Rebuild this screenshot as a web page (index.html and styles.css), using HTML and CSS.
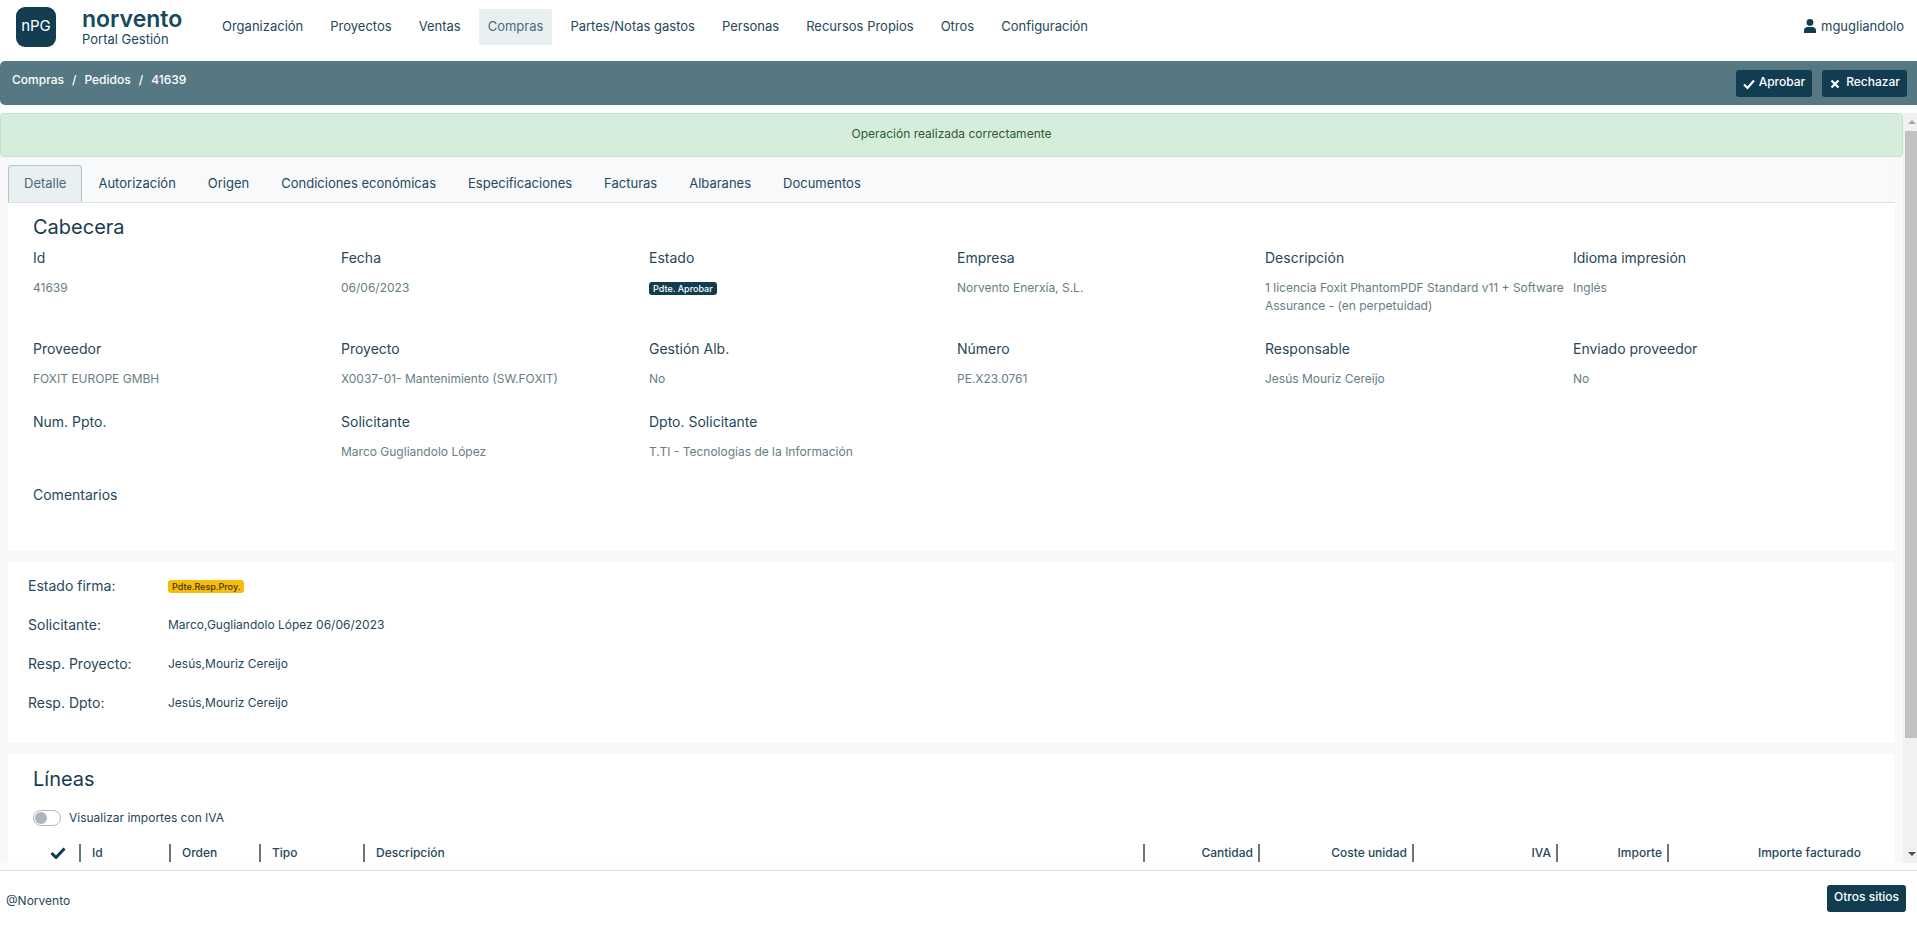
FILE: index.html
```html
<!DOCTYPE html>
<html lang="es">
<head>
<meta charset="utf-8">
<title>Portal Gestión - Pedido 41639</title>
<link rel="stylesheet" href="styles.css">
</head>
<body>
<header class="header">
  <div class="logo">nPG</div>
  <div class="brand">
    <span class="brand-name">norvento</span>
    <span class="brand-sub">Portal Gestión</span>
  </div>
  <nav class="nav">
    <a class="nav-link" href="#">Organización</a>
    <a class="nav-link" href="#">Proyectos</a>
    <a class="nav-link" href="#">Ventas</a>
    <a class="nav-link active" href="#">Compras</a>
    <a class="nav-link" href="#">Partes/Notas gastos</a>
    <a class="nav-link" href="#">Personas</a>
    <a class="nav-link" href="#">Recursos Propios</a>
    <a class="nav-link" href="#">Otros</a>
    <a class="nav-link" href="#">Configuración</a>
  </nav>
  <a class="user" href="#">
    <svg class="user-icon" viewBox="0 0 12 14"><circle cx="6" cy="3.4" r="3.4"/><path d="M0 14v-2.4C0 9.400 1.600 8 3.400 8h5.200C10.400 8 12 9.400 12 11.600V14z"/></svg>
    mgugliandolo
  </a>
</header>

<div class="toolbar">
  <nav class="breadcrumb">
    <a href="#">Compras</a><span>/</span><a href="#">Pedidos</a><span>/</span><a href="#">41639</a>
  </nav>
  <div class="actions">
    <button class="btn" type="button"><svg class="btn-icon" viewBox="0 0 12 12"><path d="M1 6.500l3.500 3.500L11 2.500"/></svg>Aprobar</button>
    <button class="btn btn-wide" type="button"><svg class="btn-icon" viewBox="0 0 12 12"><path d="M2.500 2.500l7 7M9.500 2.500l-7 7"/></svg>Rechazar</button>
  </div>
</div>

<div class="viewport">
  <main class="content">
    <div class="alert" role="alert">Operación realizada correctamente</div>
    <nav class="tabs">
      <a class="tab active" href="#">Detalle</a>
      <a class="tab" href="#">Autorización</a>
      <a class="tab" href="#">Origen</a>
      <a class="tab" href="#">Condiciones económicas</a>
      <a class="tab" href="#">Especificaciones</a>
      <a class="tab" href="#">Facturas</a>
      <a class="tab" href="#">Albaranes</a>
      <a class="tab" href="#">Documentos</a>
    </nav>

    <section class="card card-head">
      <h2 class="title">Cabecera</h2>
      <dl class="fields">
        <div class="field"><dt>Id</dt><dd>41639</dd></div>
        <div class="field"><dt>Fecha</dt><dd>06/06/2023</dd></div>
        <div class="field"><dt>Estado</dt><dd><span class="badge">Pdte. Aprobar</span></dd></div>
        <div class="field"><dt>Empresa</dt><dd>Norvento Enerxía, S.L.</dd></div>
        <div class="field"><dt>Descripción</dt><dd>1 licencia Foxit PhantomPDF Standard v11 + Software Assurance - (en perpetuidad)</dd></div>
        <div class="field"><dt>Idioma impresión</dt><dd>Inglés</dd></div>
        <div class="field"><dt>Proveedor</dt><dd>FOXIT EUROPE GMBH</dd></div>
        <div class="field"><dt>Proyecto</dt><dd>X0037-01- Mantenimiento (SW.FOXIT)</dd></div>
        <div class="field"><dt>Gestión Alb.</dt><dd>No</dd></div>
        <div class="field"><dt>Número</dt><dd>PE.X23.0761</dd></div>
        <div class="field"><dt>Responsable</dt><dd>Jesús Mouriz Cereijo</dd></div>
        <div class="field"><dt>Enviado proveedor</dt><dd>No</dd></div>
        <div class="field"><dt>Num. Ppto.</dt><dd></dd></div>
        <div class="field"><dt>Solicitante</dt><dd>Marco Gugliandolo López</dd></div>
        <div class="field"><dt>Dpto. Solicitante</dt><dd>T.TI - Tecnologías de la Información</dd></div>
        <div class="field field-full"><dt>Comentarios</dt><dd></dd></div>
      </dl>
    </section>

    <section class="card card-sign">
      <dl class="signatures">
        <dt>Estado firma:</dt><dd><span class="badge badge-warning">Pdte.Resp.Proy.</span></dd>
        <dt>Solicitante:</dt><dd>Marco,Gugliandolo López 06/06/2023</dd>
        <dt>Resp. Proyecto:</dt><dd>Jesús,Mouriz Cereijo</dd>
        <dt>Resp. Dpto:</dt><dd>Jesús,Mouriz Cereijo</dd>
      </dl>
    </section>

    <section class="card card-lines">
      <h2 class="title">Líneas</h2>
      <div class="switch-row">
        <input class="switch" type="checkbox" role="switch" id="iva">
        <label for="iva">Visualizar importes con IVA</label>
      </div>
      <table class="lines">
        <colgroup>
          <col class="c-check"><col class="c-id"><col class="c-id"><col class="c-type"><col>
          <col class="c-qty"><col class="c-cost"><col class="c-iva"><col class="c-amount"><col class="c-billed">
        </colgroup>
        <thead>
          <tr>
            <th scope="col" class="check"><svg class="check-icon" viewBox="0 0 16 12"><path d="M1.500 6l4.500 4.500L14.500 1.500"/></svg></th>
            <th scope="col">Id</th>
            <th scope="col">Orden</th>
            <th scope="col">Tipo</th>
            <th scope="col">Descripción</th>
            <th scope="col" class="num">Cantidad</th>
            <th scope="col" class="num">Coste unidad</th>
            <th scope="col" class="num">IVA</th>
            <th scope="col" class="num">Importe</th>
            <th scope="col" class="num">Importe facturado</th>
          </tr>
        </thead>
      </table>
    </section>
  </main>
  <div class="scrollbar" aria-hidden="true">
    <svg class="arrow arrow-up" viewBox="0 0 8 4"><path d="M0 4l4-4 4 4z"/></svg>
    <div class="track"><div class="thumb"></div></div>
    <svg class="arrow" viewBox="0 0 8 4"><path d="M0 0l4 4 4-4z"/></svg>
  </div>
</div>

<footer class="footer">
  <span>@Norvento</span>
  <button class="btn" type="button">Otros sitios</button>
</footer>
</body>
</html>
```
FILE: styles.css
```css
* {
  box-sizing: border-box;
}

body {
  margin: 0;
  height: 100vh;
  display: flex;
  flex-direction: column;
  background: #fbfdfe;
  color: #26485a;
  font-family: Inter, "Open Sans", sans-serif;
  font-size: 12px;
  line-height: 18px;
  overflow: hidden;
}

a {
  color: inherit;
  text-decoration: none;
}

h2,
dl,
dd {
  margin: 0;
}

.header {
  display: flex;
  align-items: flex-start;
  height: 61px;
  flex: none;
  padding: 7px 13px 0 16px;
  background: #fff;
}

.logo {
  width: 40px;
  height: 40px;
  border-radius: 9px;
  background: #123c50;
  color: #fff;
  font-size: 15px;
  line-height: 38px;
  text-align: center;
}

.brand {
  display: flex;
  flex-direction: column;
  width: 131px;
  margin-left: 26px;
  color: #174a5e;
}

.brand-name {
  font-size: 23px;
  font-weight: 600;
  line-height: 24px;
}

.brand-sub {
  font-size: 13px;
  line-height: 16px;
}

.nav {
  display: flex;
  gap: 9px;
  flex: 1;
  padding-top: 2px;
}

.nav-link {
  padding: 7px 9px 9px;
  line-height: 20px;
  font-size: 13px;
}

.nav-link.active {
  background: #e8f0f2;
  color: #4f6877;
}

.user {
  display: flex;
  align-items: center;
  gap: 5px;
  padding-top: 10px;
  font-size: 13px;
}

.user-icon {
  width: 12px;
  height: 14px;
  fill: #123c50;
}

.toolbar {
  display: flex;
  justify-content: space-between;
  align-items: flex-start;
  flex: none;
  height: 44px;
  padding: 9px 10px 0 12px;
  border-radius: 5px 0 0 5px;
  background: #567883;
  color: #fff;
}

.breadcrumb {
  display: flex;
  gap: 8px;
  padding-top: 1px;
  font-weight: 500;
}

.actions {
  display: flex;
  gap: 10px;
}

.btn {
  display: flex;
  align-items: center;
  gap: 4px;
  height: 27px;
  padding: 0 7px 3px;
  border: 0;
  border-radius: 3px;
  background: #123c50;
  color: #fff;
  font: 500 12px/18px Inter, "Open Sans", sans-serif;
}

.btn-wide {
  gap: 5px;
}

.btn-icon {
  width: 12px;
  height: 12px;
  margin-top: 4px;
  fill: none;
  stroke: #fff;
  stroke-width: 2.200;
}

.viewport {
  display: flex;
  flex: 1;
  min-height: 0;
  margin: 8px 0 7px;
}

.content {
  flex: 1;
  min-width: 0;
  overflow: hidden;
  background: #f8f8f8;
}

.alert {
  height: 44px;
  padding: 11px;
  border: 1px solid #c3e3ca;
  border-radius: 4px;
  background: #d7eddc;
  color: #2a5c33;
  text-align: center;
}

.tabs {
  display: flex;
  margin: 0 8px;
  padding-top: 8px;
  border-bottom: 1px solid #d9dfe2;
  background: #f7f9fb;
}

.tab {
  padding: 7px 15px 9px;
  border: 1px solid transparent;
  border-bottom: 0;
  border-radius: 4px 4px 0 0;
  font-size: 13px;
  line-height: 20px;
}

.tab.active {
  border-color: #b3c3c9;
  background: #e8f0f2;
  color: #4f6877;
}

.card {
  margin: 0 8px 11px;
  background: #fff;
}

.title {
  color: #173c4f;
  font-size: 20px;
  font-weight: 400;
  line-height: 28px;
}

.card-head {
  padding: 10px 14px 17px 25px;
}

.fields {
  display: grid;
  grid-template-columns: repeat(6, 1fr);
  row-gap: 24px;
  padding-top: 7px;
}

.field {
  display: flex;
  flex-direction: column;
  gap: 11px;
  padding-right: 8px;
}

.field-full {
  grid-column: 1 / -1;
}

.field dt,
.signatures dt {
  font-size: 14px;
  line-height: 20px;
}

.field dd {
  min-height: 18px;
  color: #667d84;
}

.badge {
  display: inline-block;
  padding: 0 4px;
  border-radius: 3px;
  background: #123c50;
  color: #fff;
  font-size: 9px;
  font-weight: 500;
  line-height: 13px;
}

.badge-warning {
  background: #f8bd09;
  color: #3b3413;
}

.card-sign {
  padding: 14px 20px 30px;
}

.signatures {
  display: grid;
  grid-template-columns: 140px 1fr;
  row-gap: 19px;
  align-items: center;
  line-height: 20px;
}

.card-lines {
  padding: 11px 29px 20px 25px;
}

.switch-row {
  display: flex;
  align-items: center;
  gap: 8px;
  margin: 16px 0 17px;
}

.switch {
  appearance: none;
  display: flex;
  align-items: center;
  width: 28px;
  height: 16px;
  margin: 0;
  padding: 0 1px;
  border: 1px solid #b0b8c0;
  border-radius: 8px;
}

.switch::before {
  content: "";
  width: 12px;
  height: 12px;
  border-radius: 50%;
  background: #adb5bd;
}

.switch:checked::before {
  margin-left: auto;
}

.lines {
  width: 100%;
  table-layout: fixed;
  border-collapse: separate;
  border-spacing: 0;
}

.lines th {
  height: 18px;
  padding: 0 5px 0 11px;
  border-right: 2px solid #6b7478;
  font-weight: 500;
  text-align: left;
}

.lines th:last-child {
  border-right: 0;
}

.lines .num {
  text-align: right;
}

.lines .check {
  padding: 0 0 0 17px;
}

.check-icon {
  display: block;
  width: 16px;
  height: 12px;
  fill: none;
  stroke: #123c50;
  stroke-width: 3;
}

.c-check { width: 48px; }
.c-id { width: 90px; }
.c-type { width: 104px; }
.c-qty { width: 115px; }
.c-cost { width: 154px; }
.c-iva { width: 144px; }
.c-amount { width: 111px; }
.c-billed { width: 197px; }

.scrollbar {
  display: flex;
  flex-direction: column;
  align-items: flex-end;
  flex: none;
  width: 14px;
  background: #f1f1f1;
}

.arrow {
  width: 8px;
  height: 4px;
  margin: 7px 1px;
  fill: #505050;
}

.arrow-up {
  fill: #a3a3a3;
}

.track {
  flex: 1;
  width: 12px;
}

.thumb {
  height: 85%;
  background: #c1c1c1;
}

.footer {
  display: flex;
  justify-content: space-between;
  align-items: flex-start;
  flex: none;
  height: 55px;
  padding: 14px 11px 0 6px;
  border-top: 1px solid #dfe3e5;
  background: #fff;
}

.footer span {
  padding-top: 7px;
}
```
